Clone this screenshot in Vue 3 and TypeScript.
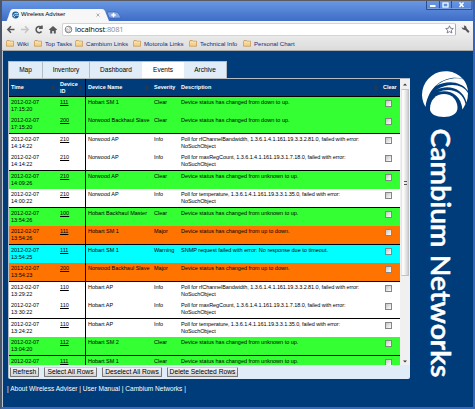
<script setup lang="ts">
interface EventRow {
  time: string
  id: string
  name: string
  severity: string
  text: string
  tone: 'ok' | 'plain' | 'major' | 'warning'
}

const up = 'Device status has changed from unknown to up.'
const back = 'Device status has changed from down to up.'
const down = 'Device status has changed from up to down.'
const bandwidth = 'Poll for rfChannelBandwidth, 1.3.6.1.4.1.161.19.3.3.2.81.0, failed with error:\nNoSuchObject'
const regCount = 'Poll for maxRegCount, 1.3.6.1.4.1.161.19.3.1.7.18.0, failed with error:\nNoSuchObject'
const temperature = 'Poll for temperature, 1.3.6.1.4.1.161.19.3.3.1.35.0, failed with error:\nNoSuchObject'

const rows: EventRow[] = [
  { time: '17:15:20', id: '111', name: 'Hobart SM 1', severity: 'Clear', text: back, tone: 'ok' },
  { time: '17:15:20', id: '200', name: 'Norwood Backhaul Slave', severity: 'Clear', text: back, tone: 'ok' },
  { time: '14:14:22', id: '210', name: 'Norwood AP', severity: 'Info', text: bandwidth, tone: 'plain' },
  { time: '14:14:22', id: '210', name: 'Norwood AP', severity: 'Info', text: regCount, tone: 'plain' },
  { time: '14:09:26', id: '210', name: 'Norwood AP', severity: 'Clear', text: up, tone: 'ok' },
  { time: '14:00:22', id: '210', name: 'Norwood AP', severity: 'Info', text: temperature, tone: 'plain' },
  { time: '13:54:26', id: '100', name: 'Hobart Backhaul Master', severity: 'Clear', text: up, tone: 'ok' },
  { time: '13:54:26', id: '111', name: 'Hobart SM 1', severity: 'Major', text: down, tone: 'major' },
  { time: '13:54:25', id: '111', name: 'Hobart SM 1', severity: 'Warning', text: 'SNMP request failed with error: No response due to timeout.', tone: 'warning' },
  { time: '13:54:23', id: '200', name: 'Norwood Backhaul Slave', severity: 'Major', text: down, tone: 'major' },
  { time: '13:29:22', id: '110', name: 'Hobart AP', severity: 'Info', text: bandwidth, tone: 'plain' },
  { time: '13:30:22', id: '110', name: 'Hobart AP', severity: 'Info', text: regCount, tone: 'plain' },
  { time: '13:24:22', id: '110', name: 'Hobart AP', severity: 'Info', text: temperature, tone: 'plain' },
  { time: '13:04:20', id: '112', name: 'Hobart SM 2', severity: 'Clear', text: up, tone: 'ok' },
  { time: '', id: '111', name: 'Hobart SM 1', severity: 'Clear', text: up, tone: 'ok' },
]

const bookmarks = [
  { label: 'Wiki', cls: 'b1' },
  { label: 'Top Tasks', cls: 'b2' },
  { label: 'Cambium Links', cls: 'b3' },
  { label: 'Motorola Links', cls: 'b4' },
  { label: 'Technical Info', cls: 'b5' },
  { label: 'Personal Chart', cls: 'b6' },
]
const tabs = ['Map', 'Inventory', 'Dashboard', 'Events', 'Archive']
const heads = ['Time', 'Device ID', 'Device Name', 'Severity', 'Description', 'Clear']
const sortable = [true, true, true, false, true, false]
const buttons = ['Refresh', 'Select All Rows', 'Deselect All Rows', 'Delete Selected Rows']
</script>

<template>
  <div class="window">
    <header class="titlebar">
      <div class="tab-shape">
        <svg class="tab-bg" width="128" height="14" viewBox="0 0 128 14">
          <path d="M0 14C3 12 4 3 6 1Q6.500 0 8 0H97Q99 0 100 2L104 12Q105 14 107 14Z" fill="#f7f7f7" />
          <path d="M102 3H111Q113 3 114 5L116 9H106Q104 9 103.500 7Z" fill="#86a8e4" stroke="#3260ad" stroke-width=".6" />
          <path d="M108.500 3.800V8.200M106.300 6H110.700" stroke="#fff" stroke-width="1.500" />
          <circle cx="10.500" cy="6" r="3.400" fill="#1c5fa0" />
          <path d="M8 7Q9 3.500 13 4.500M9 8.500Q10 5 13.500 6.500" stroke="#d4ebfa" fill="none" stroke-width=".9" />
          <path d="M91.500 4.500L94.500 7.500M94.500 4.500L91.500 7.500" stroke="#999" stroke-width=".8" />
        </svg>
        <span class="tab-title">Wireless Adviser</span>
      </div>
      <div class="controls">
        <svg width="47" height="9" viewBox="0 0 47 9">
          <path d="M.5 0V8.500H46V0M13.500 0V8.500M25.500 0V8.500" fill="none" stroke="#2c4f94" />
          <path d="M1.500 7.500H45" stroke="#86a8e6" stroke-width=".7" />
          <path d="M4 5H9.500" stroke="#fff" stroke-width="2" />
          <rect x="17" y="2" width="5" height="4" fill="none" stroke="#fff" stroke-width="1.200" />
          <path d="M33.500 1.500L37.500 6M37.500 1.500L33.500 6" stroke="#fff" stroke-width="1.500" />
        </svg>
      </div>
    </header>

    <div class="toolbar">
      <svg class="nav" width="56" height="14" viewBox="0 0 56 14" fill="none" stroke="#585858" stroke-width="1.500">
        <path d="M12.500 6.500H6M9 3.200L5.800 6.500L9 9.800" />
        <path d="M19 6.500H26M23 3.200L26.200 6.500L23 9.800" stroke="#c4c4c4" />
        <path d="M39.500 4.500A3.100 3.100 0 1 0 39.600 8.500M40 2.500V5.200H37" />
        <path d="M47 6.500L51 3L55 6.500V7H53.800V10.500H51.800V8H50.200V10.500H48.200V7H47Z" fill="#585858" stroke="none" />
      </svg>
      <div class="omnibox">
        <svg width="9" height="9" viewBox="0 0 9 9">
          <circle cx="4.500" cy="4.500" r="3.300" fill="#ccc" stroke="#888" />
          <path d="M2 3L4 2.500L5 4.500L3.500 6M6 5L7 6" stroke="#fff" fill="none" />
        </svg>
        <span class="url">localhost<i>:8081</i></span>
        <svg class="star" width="9" height="9" viewBox="0 0 9 9">
          <path d="M4.500 .8L5.600 3.300L8.300 3.500L6.300 5.300L6.900 8L4.500 6.600L2.100 8L2.700 5.300L.7 3.500L3.400 3.300Z" fill="#fff" stroke="#6d7488" stroke-width=".9" />
        </svg>
      </div>
      <svg class="wrench" width="9" height="9" viewBox="0 0 9 9">
        <path d="M.5 2.300L2.500 3L3.300 2.300L2.800 .6Q5.500 .5 5.600 3.300L8.500 6.600L7.200 8L4.200 4.900Q1.200 5.200 .5 2.300Z" fill="#555" />
      </svg>
    </div>

    <nav class="bookmarks">
      <span v-for="b in bookmarks" :key="b.label" class="bookmark" :class="b.cls">
        <svg width="8" height="7" viewBox="0 0 8 7">
          <path d="M.4 1.200L1 .5H3.400L4 1.200H7.600V6.200H.4Z" fill="#f8d18a" stroke="#b98536" stroke-width=".6" />
          <path d="M1 2.200H7" stroke="#ffebc0" stroke-width=".8" />
        </svg>
        {{ b.label }}
      </span>
    </nav>

    <main class="page">
      <section class="left">
        <div class="tabs">
          <div v-for="(t, i) in tabs" :key="t" class="tab" :class="['t' + i, { active: t === 'Events' }]">{{ t }}</div>
        </div>
        <div class="panel">
          <div class="viewport">
            <div class="table">
              <div class="row head">
                <div v-for="(h, i) in heads" :key="h" class="cell">
                  <span>{{ h }}</span>
                  <svg v-if="sortable[i]" class="sort" width="4" height="6" viewBox="0 0 4 6">
                    <path d="M0 2.500L2 .3L4 2.500ZM0 3.500L2 5.700L4 3.500Z" fill="#33383d" />
                  </svg>
                </div>
              </div>
              <div v-for="(r, i) in rows" :key="i" class="row" :class="[r.tone, { ruled: i % 2 === 1, last: i === rows.length - 1 }]">
                <div class="cell">2012-02-07<template v-if="r.time"><br />{{ r.time }}</template></div>
                <div class="cell"><u>{{ r.id }}</u></div>
                <div class="cell">{{ r.name }}</div>
                <div class="cell">{{ r.severity }}</div>
                <div class="cell desc">{{ r.text }}</div>
                <div class="cell"><span class="check"></span></div>
              </div>
            </div>
            <div class="scrollbar">
              <div class="arrow"><svg width="4" height="3" viewBox="0 0 4 3"><path d="M0 2.500L2 .5L4 2.500Z" fill="#333" /></svg></div>
              <div class="thumb"><span class="grip"></span></div>
              <div class="arrow low"><svg width="4" height="3" viewBox="0 0 4 3"><path d="M0 .5L2 2.500L4 .5Z" fill="#333" /></svg></div>
            </div>
          </div>
          <div class="actions">
            <div v-for="(b, i) in buttons" :key="b" class="button" :class="'k' + i">{{ b }}</div>
          </div>
        </div>
        <footer class="foot">| About Wireless Adviser | User Manual | Cambium Networks |</footer>
      </section>
      <svg class="brand" width="63" height="356" viewBox="410 51 63 356">
        <g fill="#fff">
          <path d="M425.500 107A23.500 23.500 0 0 1 463 79C450 74.500 429 82 425.500 107Z" />
          <path d="M436 86C445 78 458 77 463.500 79.500Q467 84 468 91C461 81 447 80 436 86Z" />
          <path d="M436 90C449 82 463 84 468 93Q468 98 466.500 102.500C463 88 448 84 436 90Z" />
          <path d="M438 92C450 87 463 91 465.500 104Q464 107 462.500 109.500C461 94 449 89 438 92Z" />
          <path d="M430 109C430 100 436 94 444 94C452 94 457.500 100 457.500 108C457.500 114 451 117 444 117C436 117 430 114 430 109Z" />
        </g>
        <text transform="translate(431.300 128.500) rotate(90)" textLength="249" lengthAdjust="spacingAndGlyphs">Cambium Networks</text>
      </svg>
    </main>
  </div>
</template>

<style>
body {
  margin: 0;
  overflow: hidden;
}
</style>

<style scoped>
* {
  box-sizing: border-box;
}
.window {
  width: 475px;
  height: 409px;
  display: flex;
  flex-direction: column;
  font-family: 'Liberation Sans', Arial, sans-serif;
  background: #3f6cc0;
  border-left: 2px solid #4b5568;
  border-top: 1px solid #5b5b60;
  border-right: 2px solid #3564b8;
  border-bottom: 2px solid #3c68b8;
}
.titlebar {
  height: 20px;
  flex: none;
  display: flex;
  justify-content: space-between;
  background: linear-gradient(#6898e4, #3f6cc6);
}
.tab-shape {
  position: relative;
  padding: 7.500px 0 0 3px;
  height: 20px;
  overflow: hidden;
}
.tab-bg {
  display: block;
}
.tab-title {
  position: absolute;
  left: 19px;
  top: 9px;
  font-size: 6px;
  line-height: 9px;
  color: #000;
  white-space: nowrap;
}
.controls {
  height: 9px;
}
.controls svg {
  display: block;
}
.toolbar {
  height: 16px;
  flex: none;
  display: flex;
  background: linear-gradient(#f7f7f7, #e9e9e9);
  padding-top: 2px;
}
.nav {
  flex: none;
}
.omnibox {
  margin-left: 4px;
  width: 394px;
  height: 13px;
  background: #fff;
  border: 1px solid #d4d4d4;
  border-right-color: #aaa;
  border-radius: 2px;
  display: flex;
  align-items: center;
  padding: 0 1px;
}
.url {
  font-size: 7.500px;
  line-height: 11px;
  margin-left: 2px;
  flex: 1;
  font-family: 'Open Sans', 'Liberation Sans', sans-serif;
  letter-spacing: -0.150px;
}
.url i {
  font-style: normal;
  color: #8a8a8a;
}
.wrench {
  margin: 2px 0 0 5px;
}
.bookmarks {
  height: 14px;
  flex: none;
  display: flex;
  background: linear-gradient(#e9e9e9, #dcdcdc);
  border-bottom: 1px solid #a9a9a9;
  padding-left: 4px;
}
.bookmark {
  display: flex;
  align-items: center;
  gap: 3px;
  flex: none;
  font-size: 6.100px;
  line-height: 13px;
  white-space: nowrap;
  color: #11307c;
}
.b1 { width: 28px; }
.b2 { width: 41px; }
.b3 { width: 58px; }
.b4 { width: 56px; }
.b5 { width: 54px; }
.page {
  height: 356px;
  flex: none;
  background: #003c79;
  border-left: 1px solid #b8c6d8;
  display: flex;
}
.left {
  width: 407px;
  flex: none;
  padding: 10px 0 0 5px;
}
.tabs {
  display: flex;
  width: 219px;
  height: 17px;
  border: 1px solid #b5bcc4;
  border-bottom: 0;
}
.tab {
  background: #e0ecf8;
  font-size: 6.500px;
  line-height: 16px;
  text-align: center;
  border-right: 1px solid #b5bcc4;
}
.t0 { width: 34px; }
.t1 { width: 47px; }
.t2 { width: 52px; border-right: 0; }
.t3 { width: 42px; }
.t4 { width: 42px; border-right: 0; }
.tab.active {
  background: #fff;
  border-right: 0;
}
.panel {
  width: 402px;
  height: 301px;
  background: #e0ecf8;
  border-left: 1px solid #b5bcc4;
  border-top: 1px solid #b5bcc4;
  border-radius: 0 0 2px 2px;
}
.viewport {
  height: 286px;
  display: flex;
  overflow: hidden;
}
.table {
  width: 391px;
  flex: none;
  font-size: 5.500px;
  line-height: 7px;
  color: #000;
}
.row {
  display: grid;
  grid-template-columns: 49px 27px 67px 27px 202px 19px;
  height: 18px;
}
.ruled {
  height: 19px;
  border-bottom: 1px solid #000;
}
.last {
  height: 9px;
}
.head {
  background: #003c79;
  color: #fff;
  font-weight: bold;
  border-bottom: 1px solid #000;
}
.cell {
  padding: 2px 0 0 2px;
  white-space: nowrap;
  overflow: hidden;
}
.cell:nth-child(3) {
  border-left: 1px solid #000;
}
.desc {
  white-space: pre;
}
.plain .desc {
  letter-spacing: -0.070px;
}
.head .cell {
  display: flex;
  align-items: center;
  justify-content: space-between;
  padding: 0 3px 0 2px;
  white-space: normal;
}
.sort {
  flex: none;
}
.ok { background: #33ff33; }
.plain { background: #fff; }
.major { background: #ff7300; }
.warning { background: #00ffff; }
.check {
  display: block;
  width: 7px;
  height: 7px;
  margin: 1px 0 0 2px;
  border: 1px solid #858585;
  background: linear-gradient(135deg, #c4c4c4, #fff);
}
.scrollbar {
  width: 10px;
  background: #f0f0f0;
  display: flex;
  flex-direction: column;
  align-items: center;
}
.arrow {
  height: 10px;
  width: 8px;
  display: flex;
  align-items: center;
  justify-content: center;
}
.low {
  margin-top: auto;
  height: 8px;
}
.thumb {
  width: 8px;
  height: 187px;
  border: 1px solid #c3c3c3;
  border-left-color: #e4e4e4;
  background: linear-gradient(90deg, #fafafa 30%, #cfcfcf);
  display: flex;
  align-items: center;
  justify-content: center;
}
.grip {
  width: 3px;
  height: 4px;
  border-top: 1px solid #555;
  border-bottom: 1px solid #555;
}
.actions {
  display: flex;
  gap: 5px;
  padding: 2px 0 0 1px;
}
.button {
  height: 10px;
  background: linear-gradient(#f5f5f5, #d4d4d4);
  border: 1px solid #777;
  border-top-color: #d0d0d0;
  border-radius: 1px;
  font-size: 6.700px;
  line-height: 8px;
  text-align: center;
  white-space: nowrap;
}
.k0 { width: 29px; }
.k1 { width: 53px; }
.k2 { width: 60px; }
.k3 { width: 71px; }
.foot {
  color: #fff;
  font-size: 6.550px;
  line-height: 9px;
  padding-top: 5px;
  margin-left: -1px;
  white-space: nowrap;
}
.brand {
  flex: none;
}
.brand text {
  fill: #fff;
  stroke: #fff;
  stroke-width: 0.500px;
  font-family: Lato, 'Open Sans', sans-serif;
  font-weight: 600;
  font-size: 26px;
}
</style>
